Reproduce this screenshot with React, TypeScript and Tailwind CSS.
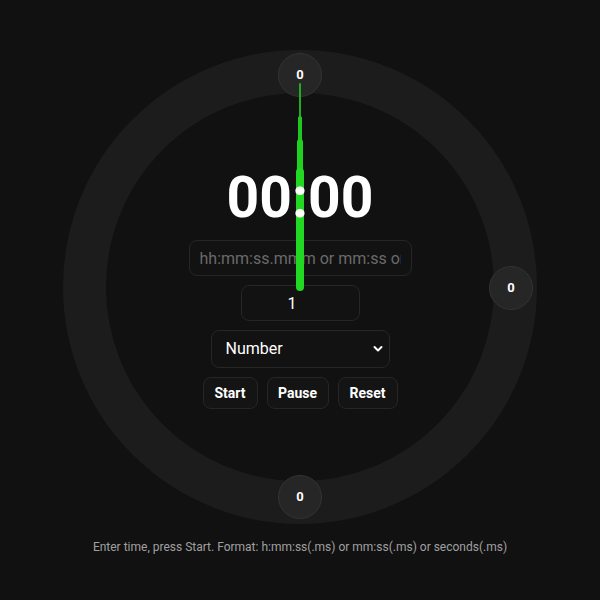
import React from "react";

function Knob({ className }: { className: string }) {
  return (
    <div
      className={`absolute w-[44px] h-[44px] rounded-full bg-[#262626] border border-[#333333] flex items-center justify-center text-white text-[13px] font-bold ${className}`}
    >
      0
    </div>
  );
}

export default function App() {
  const cx = 237;
  const cy = 237;
  return (
    <div
      className="w-[600px] h-[600px] bg-[#111111] flex flex-col items-center"
      style={{ fontFamily: "Roboto, 'Liberation Sans', sans-serif" }}
    >
      <div className="relative mt-[50px] w-[474px] h-[474px] rounded-full border-[43px] border-[#1c1c1c] bg-[#111111] flex items-center justify-center">
        <Knob className="left-[172px] top-[-40px]" />
        <Knob className="left-[383px] top-[173px]" />
        <Knob className="left-[172px] top-[382px]" />

        <div className="flex flex-col items-center gap-[9px] mt-[5px]">
          <div className="relative z-20 text-white font-bold text-[57px] leading-[56px] mb-[5px]">
            00:00
          </div>
          <input
            className="w-[223px] h-[36px] rounded-lg border border-[#262626] bg-[#121212] px-[10px] text-[16px] text-white placeholder:text-[#6a6a6a] outline-none"
            placeholder="hh:mm:ss.mmm or mm:ss or seconds"
          />
          <input
            className="w-[119px] h-[36px] rounded-lg border border-[#262626] bg-[#121212] text-center pr-[16px] text-[16px] text-white outline-none"
            defaultValue="1"
          />
          <div className="relative w-[179px] h-[38px] rounded-lg border border-[#262626] bg-[#121212] flex items-center pl-[14px] text-[16px] text-white">
            Number
            <svg
              className="absolute right-[6px] top-[14px]"
              width="10"
              height="8"
              viewBox="0 0 10 8"
              fill="none"
            >
              <path d="M1.5 2 L5 5.5 L8.5 2" stroke="white" strokeWidth="2" strokeLinecap="round" strokeLinejoin="round" />
            </svg>
          </div>
          <div className="flex gap-[9px]">
            <button className="w-[55px] h-[32px] rounded-lg border border-[#262626] bg-[#141414] text-white text-[14px] font-bold">
              Start
            </button>
            <button className="w-[62px] h-[32px] rounded-lg border border-[#262626] bg-[#141414] text-white text-[14px] font-bold">
              Pause
            </button>
            <button className="w-[60px] h-[32px] rounded-lg border border-[#262626] bg-[#141414] text-white text-[14px] font-bold">
              Reset
            </button>
          </div>
        </div>

        <svg
          className="absolute left-[-43px] top-[-43px] z-10 pointer-events-none"
          width="474"
          height="474"
          viewBox="0 0 474 474"
        >
          <line x1={cx} y1={cy} x2={cx} y2={34} stroke="#1fae1f" strokeWidth="2" strokeLinecap="round" />
          <line x1={cx} y1={cy} x2={cx} y2={68} stroke="#1ec81e" strokeWidth="4" strokeLinecap="round" />
          <line x1={cx} y1={cy} x2={cx} y2={92} stroke="#1fd21f" strokeWidth="6" strokeLinecap="round" />
          <line x1={cx} y1={cy} x2={cx} y2={122} stroke="#22d822" strokeWidth="8" strokeLinecap="round" />
        </svg>
      </div>
      <div className="mt-[14px] text-[12px] text-[#a0a0a0]">
        Enter time, press Start. Format: h:mm:ss(.ms) or mm:ss(.ms) or seconds(.ms)
      </div>
    </div>
  );
}
